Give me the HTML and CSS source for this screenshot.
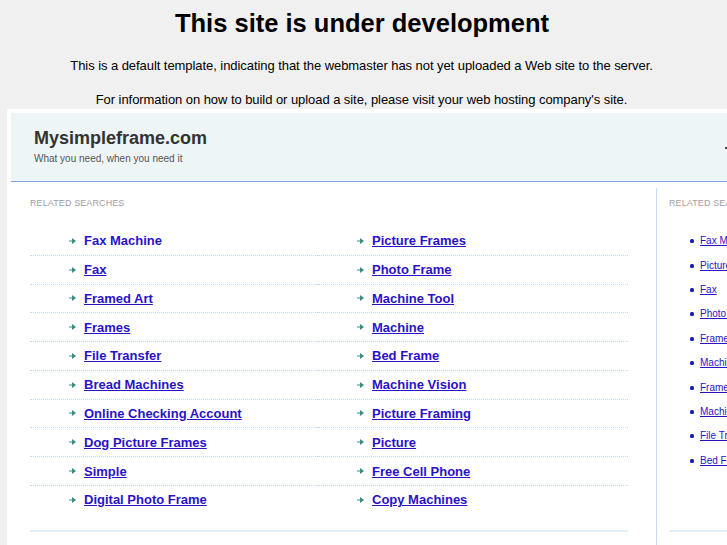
FILE: index.html
```html
<!DOCTYPE html>
<html>
<head>
<meta charset="utf-8">
<title>This site is under development</title>
<link rel="stylesheet" href="styles.css">
</head>
<body>
<div class="notice">
  <h1 class="notice-title">This site is under development</h1>
  <p class="notice-text first">This is a default template, indicating that the webmaster has not yet uploaded a Web site to the server.</p>
  <p class="notice-text">For information on how to build or upload a site, please visit your web hosting company's site.</p>
</div>
<div class="frame">
  <div class="site-header">
    <div class="brand">
      <div class="brand-name">Mysimpleframe.com</div>
      <div class="brand-tag">What you need, when you need it</div>
    </div>
    <span class="header-mark"></span>
  </div>
  <div class="site-body">
    <div class="main-col">
      <div class="label">Related Searches</div>
      <div class="results">
        <ul class="result-list left">
          <li><span class="arrow"><svg width="7" height="6" viewBox="0 0 7 6"><path d="M0 2.4h3.5v1.2H0z M3 0L7 3 3 6z" fill="#3b8b85"/></svg></span><a href="#" class="plain">Fax Machine</a></li>
          <li><span class="arrow"><svg width="7" height="6" viewBox="0 0 7 6"><path d="M0 2.4h3.5v1.2H0z M3 0L7 3 3 6z" fill="#3b8b85"/></svg></span><a href="#">Fax</a></li>
          <li><span class="arrow"><svg width="7" height="6" viewBox="0 0 7 6"><path d="M0 2.4h3.5v1.2H0z M3 0L7 3 3 6z" fill="#3b8b85"/></svg></span><a href="#">Framed Art</a></li>
          <li><span class="arrow"><svg width="7" height="6" viewBox="0 0 7 6"><path d="M0 2.4h3.5v1.2H0z M3 0L7 3 3 6z" fill="#3b8b85"/></svg></span><a href="#">Frames</a></li>
          <li><span class="arrow"><svg width="7" height="6" viewBox="0 0 7 6"><path d="M0 2.4h3.5v1.2H0z M3 0L7 3 3 6z" fill="#3b8b85"/></svg></span><a href="#">File Transfer</a></li>
          <li><span class="arrow"><svg width="7" height="6" viewBox="0 0 7 6"><path d="M0 2.4h3.5v1.2H0z M3 0L7 3 3 6z" fill="#3b8b85"/></svg></span><a href="#">Bread Machines</a></li>
          <li><span class="arrow"><svg width="7" height="6" viewBox="0 0 7 6"><path d="M0 2.4h3.5v1.2H0z M3 0L7 3 3 6z" fill="#3b8b85"/></svg></span><a href="#">Online Checking Account</a></li>
          <li><span class="arrow"><svg width="7" height="6" viewBox="0 0 7 6"><path d="M0 2.4h3.5v1.2H0z M3 0L7 3 3 6z" fill="#3b8b85"/></svg></span><a href="#">Dog Picture Frames</a></li>
          <li><span class="arrow"><svg width="7" height="6" viewBox="0 0 7 6"><path d="M0 2.4h3.5v1.2H0z M3 0L7 3 3 6z" fill="#3b8b85"/></svg></span><a href="#">Simple</a></li>
          <li class="last"><span class="arrow"><svg width="7" height="6" viewBox="0 0 7 6"><path d="M0 2.4h3.5v1.2H0z M3 0L7 3 3 6z" fill="#3b8b85"/></svg></span><a href="#">Digital Photo Frame</a></li>
        </ul>
        <ul class="result-list right">
          <li><span class="arrow"><svg width="7" height="6" viewBox="0 0 7 6"><path d="M0 2.4h3.5v1.2H0z M3 0L7 3 3 6z" fill="#3b8b85"/></svg></span><a href="#">Picture Frames</a></li>
          <li><span class="arrow"><svg width="7" height="6" viewBox="0 0 7 6"><path d="M0 2.4h3.5v1.2H0z M3 0L7 3 3 6z" fill="#3b8b85"/></svg></span><a href="#">Photo Frame</a></li>
          <li><span class="arrow"><svg width="7" height="6" viewBox="0 0 7 6"><path d="M0 2.4h3.5v1.2H0z M3 0L7 3 3 6z" fill="#3b8b85"/></svg></span><a href="#">Machine Tool</a></li>
          <li><span class="arrow"><svg width="7" height="6" viewBox="0 0 7 6"><path d="M0 2.4h3.5v1.2H0z M3 0L7 3 3 6z" fill="#3b8b85"/></svg></span><a href="#">Machine</a></li>
          <li><span class="arrow"><svg width="7" height="6" viewBox="0 0 7 6"><path d="M0 2.4h3.5v1.2H0z M3 0L7 3 3 6z" fill="#3b8b85"/></svg></span><a href="#">Bed Frame</a></li>
          <li><span class="arrow"><svg width="7" height="6" viewBox="0 0 7 6"><path d="M0 2.4h3.5v1.2H0z M3 0L7 3 3 6z" fill="#3b8b85"/></svg></span><a href="#">Machine Vision</a></li>
          <li><span class="arrow"><svg width="7" height="6" viewBox="0 0 7 6"><path d="M0 2.4h3.5v1.2H0z M3 0L7 3 3 6z" fill="#3b8b85"/></svg></span><a href="#">Picture Framing</a></li>
          <li><span class="arrow"><svg width="7" height="6" viewBox="0 0 7 6"><path d="M0 2.4h3.5v1.2H0z M3 0L7 3 3 6z" fill="#3b8b85"/></svg></span><a href="#">Picture</a></li>
          <li><span class="arrow"><svg width="7" height="6" viewBox="0 0 7 6"><path d="M0 2.4h3.5v1.2H0z M3 0L7 3 3 6z" fill="#3b8b85"/></svg></span><a href="#">Free Cell Phone</a></li>
          <li class="last"><span class="arrow"><svg width="7" height="6" viewBox="0 0 7 6"><path d="M0 2.4h3.5v1.2H0z M3 0L7 3 3 6z" fill="#3b8b85"/></svg></span><a href="#">Copy Machines</a></li>
        </ul>
      </div>
      <div class="rule"></div>
    </div>
    <div class="side-col">
      <div class="label">Related Searches</div>
      <ul class="side-list">
        <li><a href="#">Fax Machine</a></li>
        <li><a href="#">Picture Frames</a></li>
        <li><a href="#">Fax</a></li>
        <li><a href="#">Photo Frame</a></li>
        <li><a href="#">Framed Art</a></li>
        <li><a href="#">Machine Tool</a></li>
        <li><a href="#">Frames</a></li>
        <li><a href="#">Machine</a></li>
        <li><a href="#">File Transfer</a></li>
        <li><a href="#">Bed Frame</a></li>
      </ul>
      <div class="rule side-rule"></div>
    </div>
  </div>
</div>
</body>
</html>
```

FILE: styles.css
```css
html, body {
  margin: 0;
  padding: 0;
}
body {
  width: 727px;
  height: 545px;
  overflow: hidden;
  background: #f0f0f0;
  font-family: "Liberation Sans", Arial, sans-serif;
  color: #000;
}
.notice {
  padding: 9px 4px 0 0;
  text-align: center;
}
.notice-title {
  margin: 0 0 0 1px;
  font-size: 25.5px;
  line-height: 28px;
  font-weight: bold;
}
.notice-text {
  margin: 18px 0 0;
  font-size: 13px;
  line-height: 16px;
  letter-spacing: -0.06px;
}
.notice-text.first {
  margin-top: 21px;
}
.frame {
  margin: 1px 0 0 7px;
  padding: 4px;
  width: 960px;
  height: 460px;
  background: #fff;
}
.site-header {
  height: 68px;
  background: #eef5f7;
  border-bottom: 1px solid #86a6de;
  display: flex;
  justify-content: space-between;
  position: relative;
}
.brand {
  padding: 14px 0 0 23px;
}
.brand-name {
  font-size: 18px;
  line-height: 22px;
  font-weight: bold;
  color: #333;
}
.brand-tag {
  margin-top: 4px;
  font-size: 10px;
  line-height: 12px;
  color: #555;
}
.header-mark {
  position: absolute;
  left: 714px;
  top: 34px;
  width: 2px;
  height: 2px;
  background: #444;
}
.site-body {
  display: flex;
}
.main-col {
  width: 617px;
  padding: 15px 0 0 19px;
  margin-right: 9px;
}
.label {
  font-size: 9px;
  line-height: 12px;
  color: #a0a0a0;
  text-transform: uppercase;
  letter-spacing: 0.1px;
}
.results {
  margin-top: 18px;
  display: grid;
  grid-template-columns: 288px 310px;
}
.result-list {
  margin: 0;
  padding: 0;
  list-style: none;
}
.result-list li {
  height: 27.78px;
  border-bottom: 1px dotted #c6d8f3;
  display: flex;
  align-items: center;
  padding-left: 39px;
  font-size: 13px;
  font-weight: bold;
}
.result-list li.last {
  border-bottom-color: transparent;
}
.arrow {
  display: flex;
  width: 7px;
  margin-right: 8px;
}
.result-list a {
  color: #2a12c8;
  text-decoration: underline;
}
.result-list a.plain {
  text-decoration: none;
}
.rule {
  margin-top: 15px;
  width: 598px;
  height: 2px;
  background: #e2edf8;
}
.side-col {
  margin-top: 6px;
  border-left: 1px solid #c8dbf3;
  padding: 9px 0 0 12px;
  width: 260px;
  height: 360px;
}
.side-list {
  margin: 20px 0 0;
  padding: 0 0 0 21px;
  list-style: none;
}
.side-list li {
  height: 24.4px;
  display: flex;
  align-items: center;
  font-size: 10px;
  line-height: 12px;
}
.side-list li::before {
  content: "";
  width: 4px;
  height: 4px;
  border-radius: 1.5px;
  background: #1b1fb8;
  margin-right: 6px;
}
.side-list a {
  color: #2a12c8;
  text-decoration: underline;
}
.side-rule {
  margin-top: 57px;
  width: 200px;
}
```
